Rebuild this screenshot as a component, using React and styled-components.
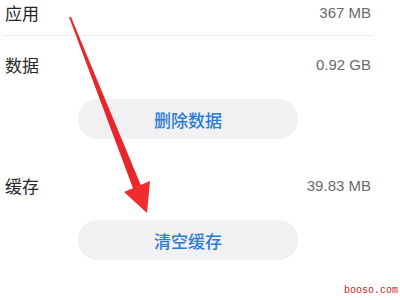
import React from 'react';
import styled, {createGlobalStyle} from 'styled-components';

const GlobalStyle = createGlobalStyle`
  html, body { margin: 0; padding: 0; background: #fff; }
  body { width: 400px; height: 300px; overflow: hidden; }
`;

const Screen = styled.div`
  position: relative;
  width: 400px;
  height: 300px;
  background: #fff;
  font-family: "Liberation Sans", "Noto Sans CJK SC", sans-serif;
  display: flex;
  flex-direction: column;
`;

const Row = styled.div`
  display: flex;
  justify-content: space-between;
  align-items: center;
  height: 24px;
  margin-top: ${props => props.top}px;
  padding: 0 29px 0 5px;
`;

const Divider = styled.div`
  height: 1px;
  background: #ebebeb;
  margin: 11px 27px 0 3px;
`;

const Label = styled.span`
  font-size: 17px;
  color: #262626;
  font-family: "Noto Sans CJK SC", sans-serif;
`;

const Value = styled.span`
  font-size: 15px;
  color: #6a6a6a;
`;

const ButtonWrap = styled.div`
  display: flex;
  padding-left: 78px;
  margin-top: 23px;
`;

const PillButton = styled.button`
  width: 220px;
  height: 40px;
  border: none;
  border-radius: 20px;
  background: #f1f1f3;
  color: #2a7bd8;
  font-size: 17px;
  font-weight: 500;
  font-family: "Noto Sans CJK SC", sans-serif;
  padding: 0;
  cursor: pointer;
`;

const Arrow = styled.svg`
  position: absolute;
  left: 0;
  top: 0;
  pointer-events: none;
`;

const Watermark = styled.span`
  position: absolute;
  right: 2px;
  bottom: 4px;
  font-family: "Liberation Mono", monospace;
  font-size: 10px;
  color: #d42020;
`;

export default function App() {
  return (
    <>
      <GlobalStyle />
      <Screen>
        <Row top={0}>
          <Label>应用</Label>
          <Value>367 MB</Value>
        </Row>
        <Divider />
        <Row top={16}>
          <Label>数据</Label>
          <Value>0.92 GB</Value>
        </Row>
        <ButtonWrap>
          <PillButton>删除数据</PillButton>
        </ButtonWrap>
        <Row top={34}>
          <Label>缓存</Label>
          <Value>39.83 MB</Value>
        </Row>
        <ButtonWrap>
          <PillButton>清空缓存</PillButton>
        </ButtonWrap>
        <Arrow width="400" height="300" viewBox="0 0 400 300">
          <polygon points="69,17 71,17 142,188 134,191" fill="#e8262b" />
          <polygon points="147,213 124,192 150,181" fill="#f02a2f" />
        </Arrow>
        <Watermark>booso.com</Watermark>
      </Screen>
    </>
  );
}
